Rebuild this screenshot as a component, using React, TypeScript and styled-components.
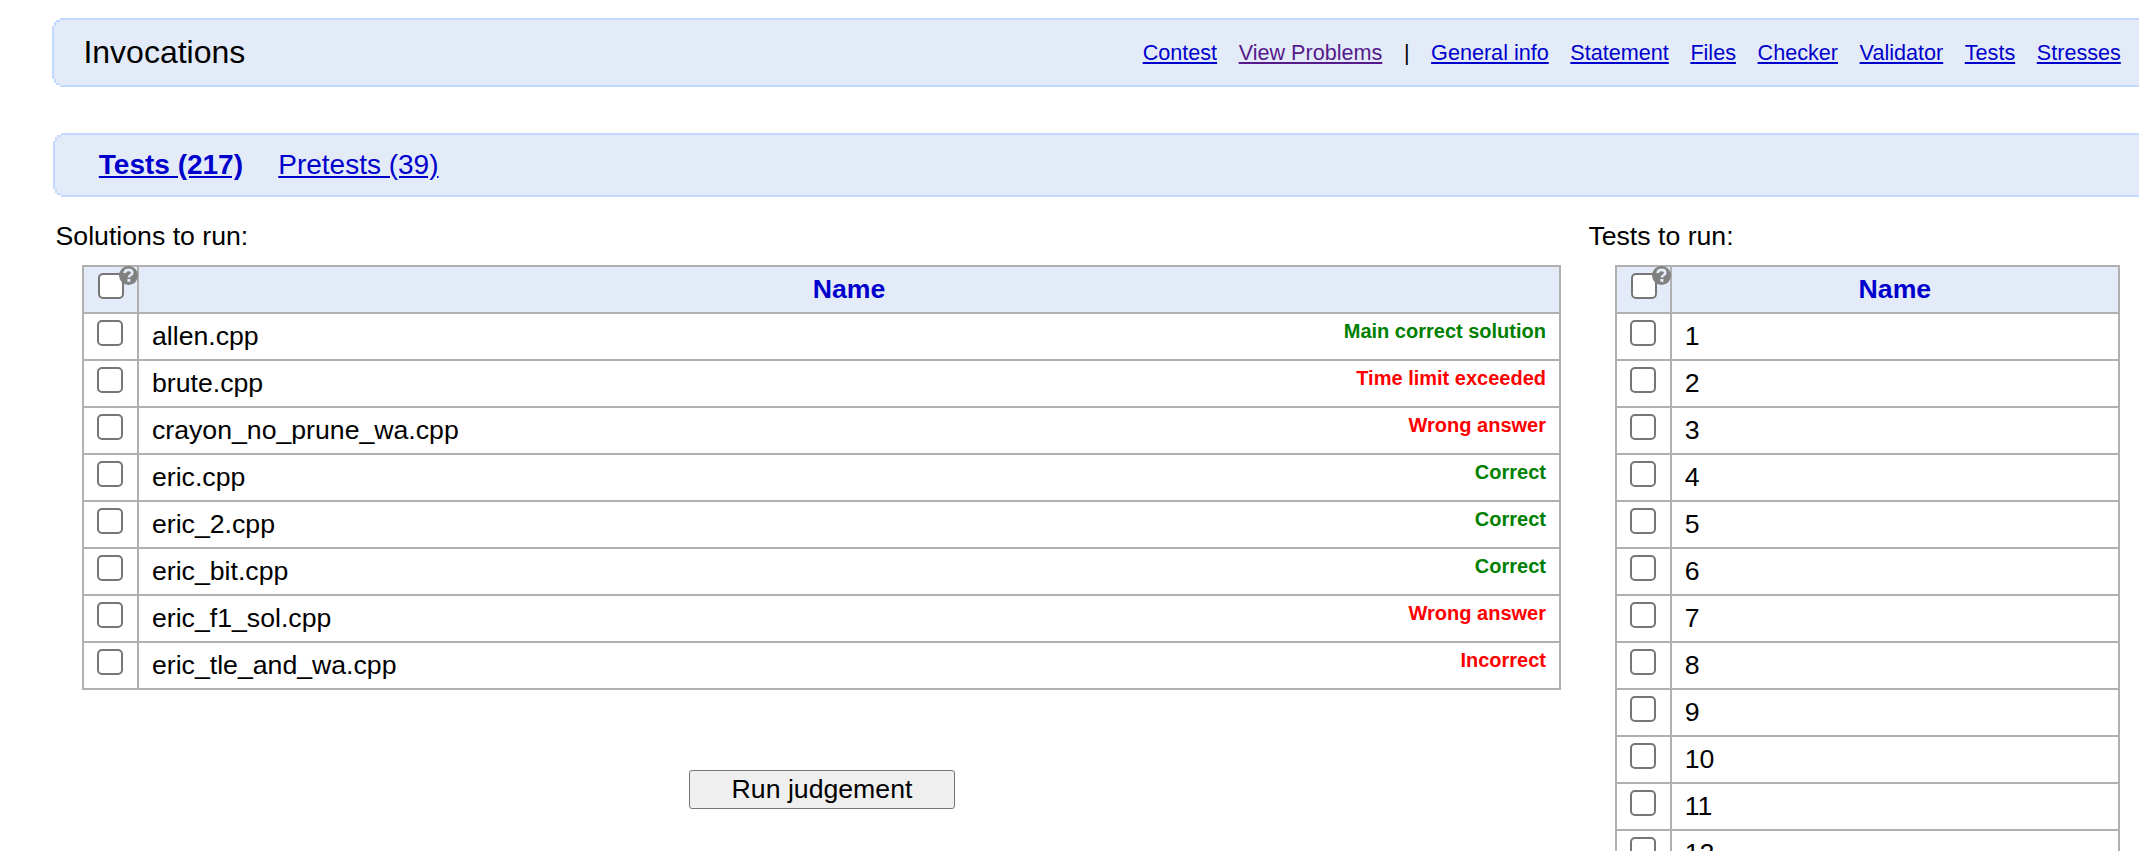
import React from "react";
import styled, { createGlobalStyle } from "styled-components";

const GlobalStyle = createGlobalStyle`
  body {
    margin: 0;
    background: #fff;
    overflow: hidden;
  }
`;

const Page = styled.main`
  box-sizing: border-box;
  height: 851px;
  overflow: hidden;
  padding: 18px 0 0 52px;
  display: flex;
  flex-direction: column;
  font-family: "Liberation Sans", Arial, sans-serif;
  font-size: 26.667px;
  line-height: 30px;
  color: #000;
`;

/* Bars run past the right edge, so only the left corners are stepped. */
const BarEdge = styled.div<{ $height: number }>`
  flex: none;
  box-sizing: border-box;
  height: ${(p) => p.$height}px;
  padding: 2px 0 2px 2px;
  display: flex;
  background: #c3d9ff;
  clip-path: polygon(
    8px 0, 100% 0, 100% 100%, 8px 100%, 8px calc(100% - 2px), 4px calc(100% - 2px),
    4px calc(100% - 4px), 2px calc(100% - 4px), 2px calc(100% - 8px), 0 calc(100% - 8px),
    0 8px, 2px 8px, 2px 4px, 4px 4px, 4px 2px, 8px 2px
  );
`;

const BarFill = styled.div`
  flex: 1;
  display: flex;
  align-items: center;
  background: #e4ebf8;
  clip-path: polygon(
    6px 0, 100% 0, 100% 100%, 6px 100%, 6px calc(100% - 2px), 2px calc(100% - 2px),
    2px calc(100% - 6px), 0 calc(100% - 6px), 0 6px, 2px 6px, 2px 2px, 6px 2px
  );
`;

const TopContent = styled(BarFill)`
  justify-content: space-between;
  padding: 0 18.2px 2px 29.4px;
`;

const TabContent = styled(BarFill)`
  gap: 35.2px;
  padding: 0 0 0 43.8px;
`;

const TabBar = styled.div`
  margin: 46px 0 0 1px;
`;

const Title = styled.h1`
  margin: 0;
  font-size: 32px;
  font-weight: 400;
  line-height: 36px;
`;

const Nav = styled.nav`
  display: flex;
  gap: 21.6px;
  margin-top: 2px;
  font-size: 21.6px;
  line-height: 26px;
`;

const Link = styled.a<{ $visited?: boolean }>`
  color: ${(p) => (p.$visited ? "#551a8b" : "#0000cc")};
  text-decoration: underline;
`;

const Tab = styled(Link)<{ $active?: boolean }>`
  font-size: 28px;
  line-height: 32px;
  font-weight: ${(p) => (p.$active ? 700 : 400)};
`;

const Columns = styled.div`
  display: flex;
  align-items: flex-start;
  gap: 27.4px;
  margin: 24px 0 0 3.6px;
`;

const Column = styled.section<{ $width: number }>`
  flex: none;
  width: ${(p) => p.$width}px;
`;

const Caption = styled.div`
  height: 44px;
`;

const Table = styled.div`
  margin-left: 26.4px;
  border: 2px solid #b0b0b0;
  border-bottom: 0;
`;

const Row = styled.div<{ $head?: boolean }>`
  display: flex;
  height: 45px;
  border-bottom: 2px solid #b0b0b0;
  background: ${(p) => (p.$head ? "#e4ebf8" : "#fff")};
`;

const CheckCell = styled.div<{ $head?: boolean }>`
  position: relative;
  flex: none;
  box-sizing: border-box;
  width: 55px;
  padding: 6px 0 0 ${(p) => (p.$head ? 14 : 13)}px;
  border-right: 2px solid #b0b0b0;
`;

const Checkbox = styled.input.attrs({ type: "checkbox" })`
  appearance: none;
  display: block;
  box-sizing: border-box;
  width: 26px;
  height: 26px;
  margin: 0;
  border: 2px solid #767676;
  border-radius: 5px;
  background: #fff;
`;

const HelpBadge = styled.svg`
  position: absolute;
  top: -1.5px;
  right: -1px;
  width: 19px;
  height: 19px;
`;

const HeadName = styled.div`
  flex: 1;
  padding-top: 7px;
  text-align: center;
  font-weight: 700;
  color: #0000cc;
`;

const NameCell = styled.div`
  flex: 1;
  display: flex;
  justify-content: space-between;
  padding: 7px 13px 0 13px;
`;

const Verdict = styled.span<{ $ok: boolean }>`
  margin-top: -1px;
  font-size: 20px;
  line-height: 22px;
  font-weight: 700;
  color: ${(p) => (p.$ok ? "#008000" : "#ff0000")};
`;

const RunButton = styled.button`
  display: block;
  box-sizing: border-box;
  width: 266px;
  height: 39px;
  margin: 80px 0 0 633.4px;
  padding: 0 0 2px;
  border: 1px solid #767676;
  border-radius: 3px;
  background: #efefef;
  font: inherit;
  color: #000;
`;

const Help = () => (
  <HelpBadge viewBox="0 0 19 19">
    <circle cx="9.5" cy="9.5" r="9.5" fill="#808080" />
    <path
      d="M5.6 7.2C5.8 4.7 7.3 3.9 9.5 3.9s3.8 1.1 3.8 3c0 2.1-3.4 2.2-3.4 4.6"
      fill="none"
      stroke="#e4ebf8"
      strokeWidth="2.6"
    />
    <rect x="8.4" y="13" width="3" height="2.8" fill="#e4ebf8" />
  </HelpBadge>
);

const TableHead = () => (
  <Row $head>
    <CheckCell $head>
      <Checkbox />
      <Help />
    </CheckCell>
    <HeadName>Name</HeadName>
  </Row>
);

const navLinks = ["General info", "Statement", "Files", "Checker", "Validator", "Tests", "Stresses"];

const solutions = [
  { name: "allen.cpp", verdict: "Main correct solution", ok: true },
  { name: "brute.cpp", verdict: "Time limit exceeded", ok: false },
  { name: "crayon_no_prune_wa.cpp", verdict: "Wrong answer", ok: false },
  { name: "eric.cpp", verdict: "Correct", ok: true },
  { name: "eric_2.cpp", verdict: "Correct", ok: true },
  { name: "eric_bit.cpp", verdict: "Correct", ok: true },
  { name: "eric_f1_sol.cpp", verdict: "Wrong answer", ok: false },
  { name: "eric_tle_and_wa.cpp", verdict: "Incorrect", ok: false },
];

const tests = Array.from({ length: 12 }, (_, i) => i + 1);

export default function App() {
  return (
    <>
      <GlobalStyle />
      <Page>
        <BarEdge $height={69}>
          <TopContent>
            <Title>Invocations</Title>
            <Nav>
              <Link href="#">Contest</Link>
              <Link href="#" $visited>View Problems</Link>
              <span>|</span>
              {navLinks.map((label) => (
                <Link key={label} href="#">{label}</Link>
              ))}
            </Nav>
          </TopContent>
        </BarEdge>
        <TabBar>
          <BarEdge $height={64}>
            <TabContent>
              <Tab href="#" $active>Tests (217)</Tab>
              <Tab href="#">Pretests (39)</Tab>
            </TabContent>
          </BarEdge>
        </TabBar>
        <Columns>
          <Column $width={1505.4}>
            <Caption>Solutions to run:</Caption>
            <Table>
              <TableHead />
              {solutions.map((s) => (
                <Row key={s.name}>
                  <CheckCell>
                    <Checkbox />
                  </CheckCell>
                  <NameCell>
                    <span>{s.name}</span>
                    <Verdict $ok={s.ok}>{s.verdict}</Verdict>
                  </NameCell>
                </Row>
              ))}
            </Table>
            <RunButton>Run judgement</RunButton>
          </Column>
          <Column $width={531.6}>
            <Caption>Tests to run:</Caption>
            <Table>
              <TableHead />
              {tests.map((n) => (
                <Row key={n}>
                  <CheckCell>
                    <Checkbox />
                  </CheckCell>
                  <NameCell>{n}</NameCell>
                </Row>
              ))}
            </Table>
          </Column>
        </Columns>
      </Page>
    </>
  );
}
